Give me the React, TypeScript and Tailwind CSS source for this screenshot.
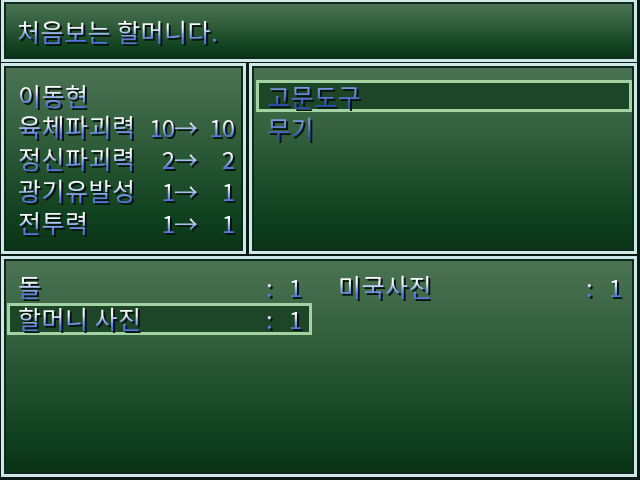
import React from "react";

const font = { fontFamily: '"Noto Sans CJK KR", "Noto Sans", sans-serif' };

function T({ children, blue = false, className = "" }: { children: React.ReactNode; blue?: boolean; className?: string }) {
  return (
    <span
      className={
        "inline-block whitespace-nowrap leading-[26px] bg-clip-text text-transparent drop-shadow-[2px_2px_0_#06140c] " +
        (blue
          ? "bg-[linear-gradient(to_bottom,#8aa4e8_0%,#6c88dc_40%,#2f4fb8_85%)] "
          : "bg-[linear-gradient(to_bottom,#ffffff_0%,#f4f6ff_38%,#9ab0f4_60%,#5474e0_85%)] ") +
        className
      }
    >
      {children}
    </span>
  );
}

const K = "text-[25px] tracking-[0.5px]";

function Win({ className = "", children }: { className?: string; children?: React.ReactNode }) {
  return (
    <div className={"border-[3px] border-[#cde8e6] " + className}>
      <div className="h-full w-full border-2 border-[#0d2a1c] bg-[linear-gradient(to_bottom,#4b7353_0%,#34603e_35%,#1c4c29_65%,#0e3f1e_85%,#0b3316_100%)]">
        {children}
      </div>
    </div>
  );
}

const stats = [
  { l: "육체파괴력", a: "10", b: "10" },
  { l: "정신파괴력", a: "2", b: "2" },
  { l: "광기유발성", a: "1", b: "1" },
  { l: "전투력", a: "1", b: "1" },
];

function Item({ name, n, sel = false }: { name: string; n: string; sel?: boolean }) {
  return (
    <div
      className={
        "flex h-[32px] items-center border-[3px] pl-[8px] pr-[7px] " +
        (sel ? "border-[#a3d3a3] bg-[#1d4527]" : "border-transparent")
      }
    >
      <div className="min-w-0 flex-1 whitespace-nowrap">
        <T className={K}>{name}</T>
      </div>
      <div className="w-[12px] shrink-0">
        <T>:</T>
      </div>
      <div className="w-[24px] shrink-0 text-right">
        <T>{n}</T>
      </div>
    </div>
  );
}

export default function App() {
  return (
    <div
      className="flex h-[480px] w-[640px] flex-col overflow-hidden bg-[#0b1a17] pl-[1px] text-[24px] leading-[32px]"
      style={font}
    >
      <Win className="mt-[-1px] h-[63px] w-[636px]">
        <div className="flex h-[32px] items-center pl-[11px] mt-[11px]">
          <T className={K}>처음보는 할머니다.</T>
        </div>
      </Win>
      <div className="mt-[1px] flex h-[191px] gap-[3px]">
        <Win className="h-full w-[245px]">
          <div className="pl-[12px] pt-[11px]">
            <div className="flex h-[32px] items-center">
              <T className={K}>이동현</T>
            </div>
            {stats.map((s) => (
              <div key={s.l} className="flex h-[32px] w-[216px] items-center">
                <div className="min-w-0 flex-1 whitespace-nowrap">
                  <T className={K}>{s.l}</T>
                </div>
                <div className="w-[40px] shrink-0 text-right">
                  <T className="tracking-[-1px]">{s.a}</T>
                </div>
                <div className="w-[24px] shrink-0">
                  <T>→</T>
                </div>
                <div className="w-[36px] shrink-0 text-right">
                  <T className="tracking-[-1px]">{s.b}</T>
                </div>
              </div>
            ))}
          </div>
        </Win>
        <Win className="h-full w-[388px]">
          <div className="pl-[2px] pt-[12px]">
            <div className="flex h-[32px] items-center border-[3px] border-[#a3d3a3] bg-[#1d4527] pl-[8px]">
              <T blue className={K}>고문도구</T>
            </div>
            <div className="flex h-[32px] items-center pl-[11px]">
              <T blue className={K}>무기</T>
            </div>
          </div>
        </Win>
      </div>
      <Win className="mt-[2px] h-[221px] w-[636px]">
        <div className="grid grid-cols-[305px_305px] gap-x-[15px] pl-[1px] pt-[10px]">
          <Item name="돌" n="1" />
          <Item name="미국사진" n="1" />
          <Item name="할머니 사진" n="1" sel />
        </div>
      </Win>
    </div>
  );
}
